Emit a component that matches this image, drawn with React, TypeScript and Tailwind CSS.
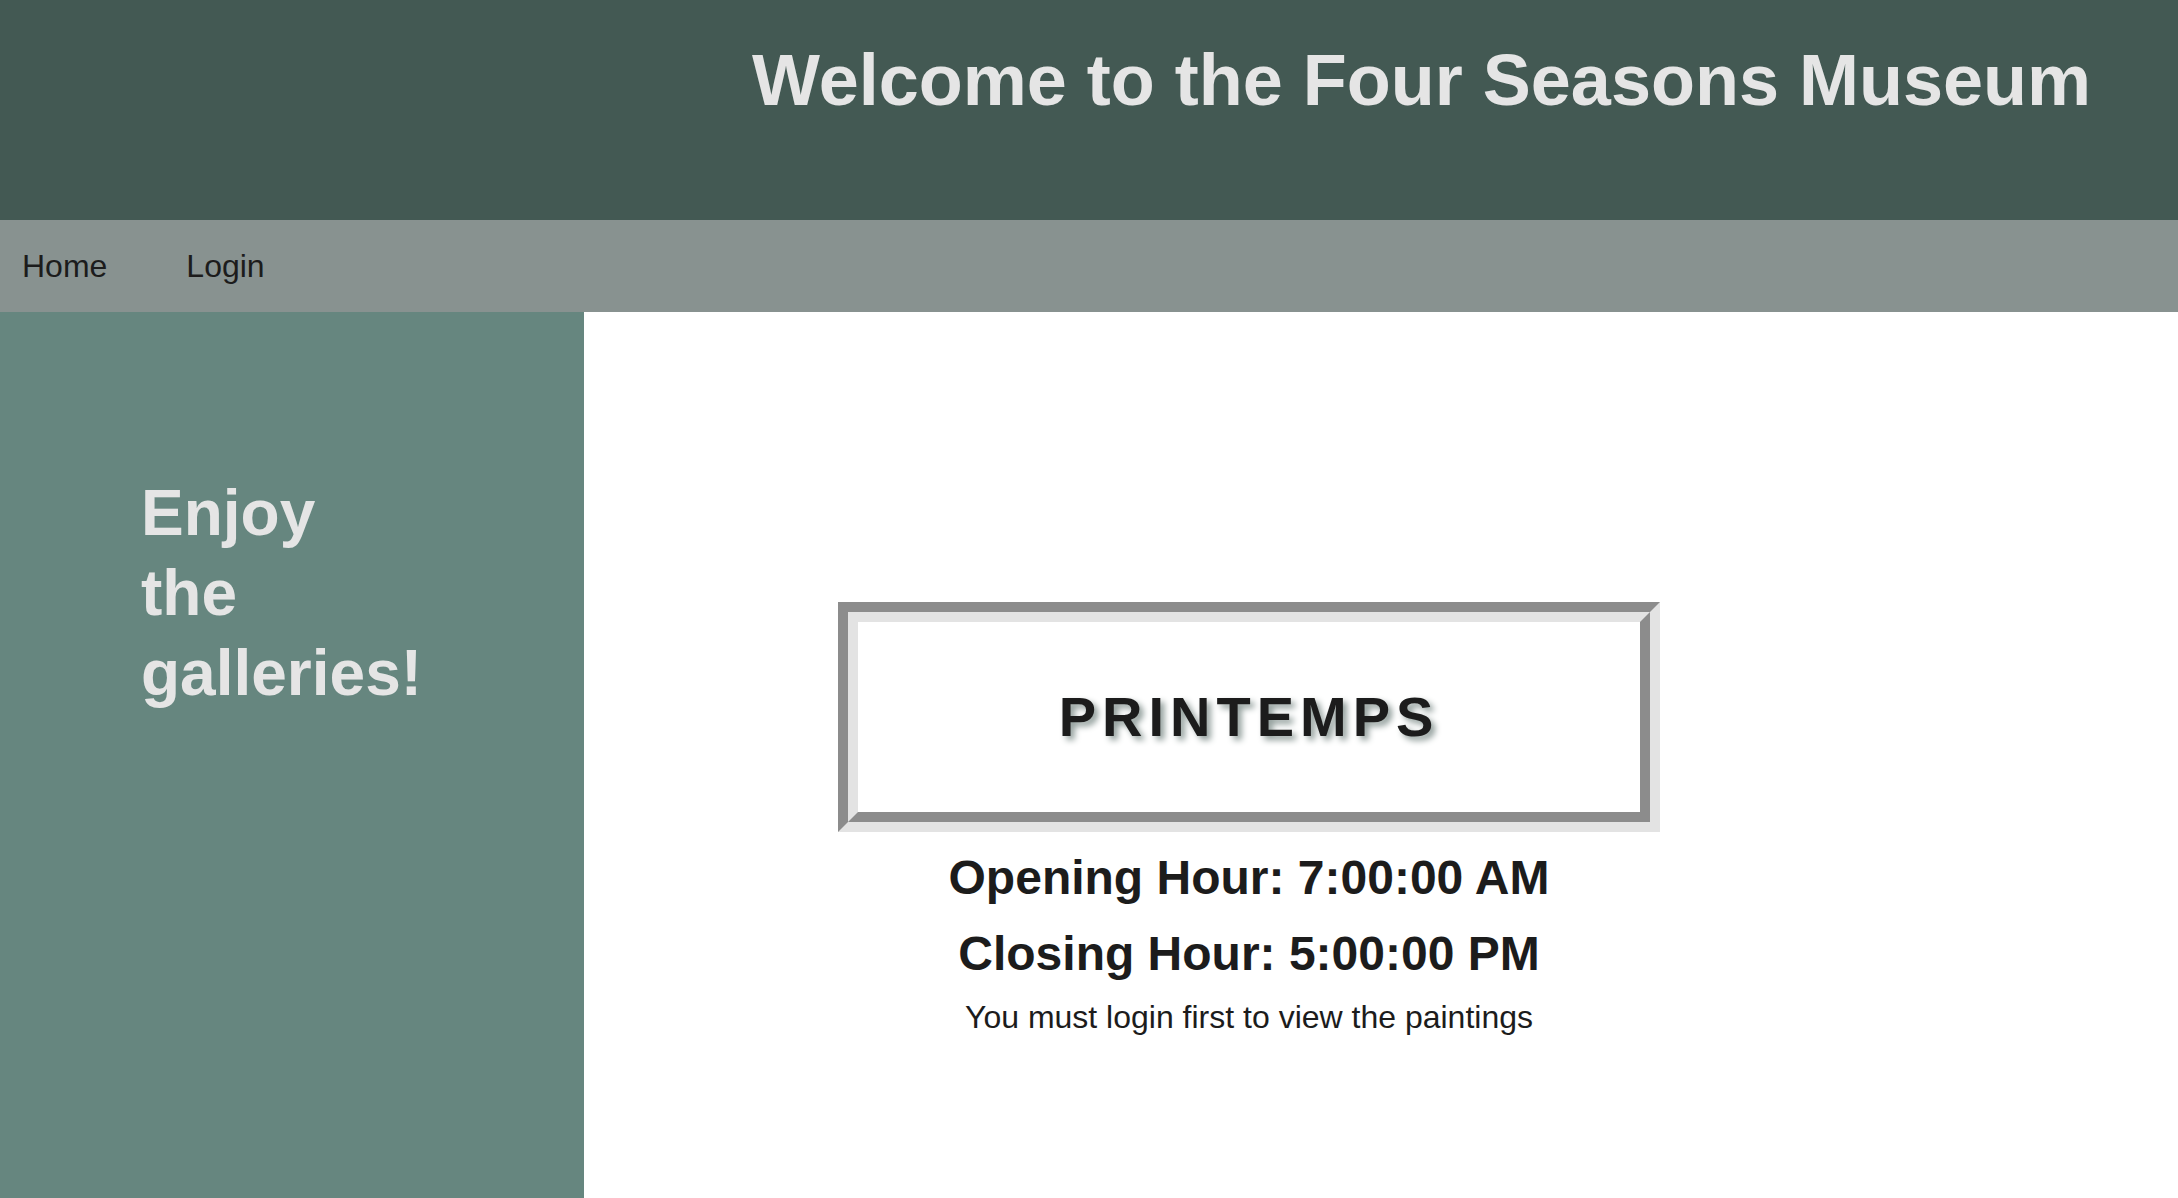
import React from "react";

const App: React.FC = () => {
  return (
    <div className="flex h-screen flex-col overflow-hidden bg-white font-['Liberation_Sans',Arial,sans-serif] text-[#1c1c1c]">
      {/* header */}
      <header className="flex h-[220px] shrink-0 justify-end bg-[#435953] pr-[87px] pt-[40px]">
        <h1 className="text-[72px] font-bold leading-[80px] text-[#e5e5e5]">
          Welcome to the Four Seasons Museum
        </h1>
      </header>

      {/* nav */}
      <nav className="flex h-[92px] shrink-0 items-center gap-[79px] bg-[#889290] pl-[22px]">
        <a className="text-[32px] leading-[40px]">Home</a>
        <a className="text-[32px] leading-[40px]">Login</a>
      </nav>

      <div className="flex flex-1">
        {/* sidebar */}
        <aside className="w-[584px] shrink-0 bg-[#66867f] pl-[141px] pt-[161px]">
          <h2 className="text-[64px] font-bold leading-[80px] text-[#e5e5e5]">
            Enjoy
            <br />
            the
            <br />
            galleries!
          </h2>
        </aside>

        {/* main */}
        <main className="flex-1 pl-[254px] pt-[290px]">
          <div className="flex w-[822px] flex-col items-center text-center">
            <div className="w-full border-[10px] border-b-[#e3e3e3] border-l-[#8c8c8c] border-r-[#e3e3e3] border-t-[#8c8c8c]">
              <div className="flex h-[210px] items-center justify-center border-[10px] border-b-[#8c8c8c] border-l-[#e3e3e3] border-r-[#8c8c8c] border-t-[#e3e3e3]">
                <span className="text-[56px] font-bold leading-[64px] tracking-[6px] [text-shadow:4px_4px_6px_#8f9c99]">
                  PRINTEMPS
                </span>
              </div>
            </div>
            <p className="mt-[10px] text-[48px] font-bold leading-[72px]">
              Opening Hour: 7:00:00 AM
            </p>
            <p className="mt-[4px] text-[48px] font-bold leading-[72px]">
              Closing Hour: 5:00:00 PM
            </p>
            <p className="mt-[7px] text-[32px] leading-[40px]">
              You must login first to view the paintings
            </p>
          </div>
        </main>
      </div>
    </div>
  );
};

export default App;
